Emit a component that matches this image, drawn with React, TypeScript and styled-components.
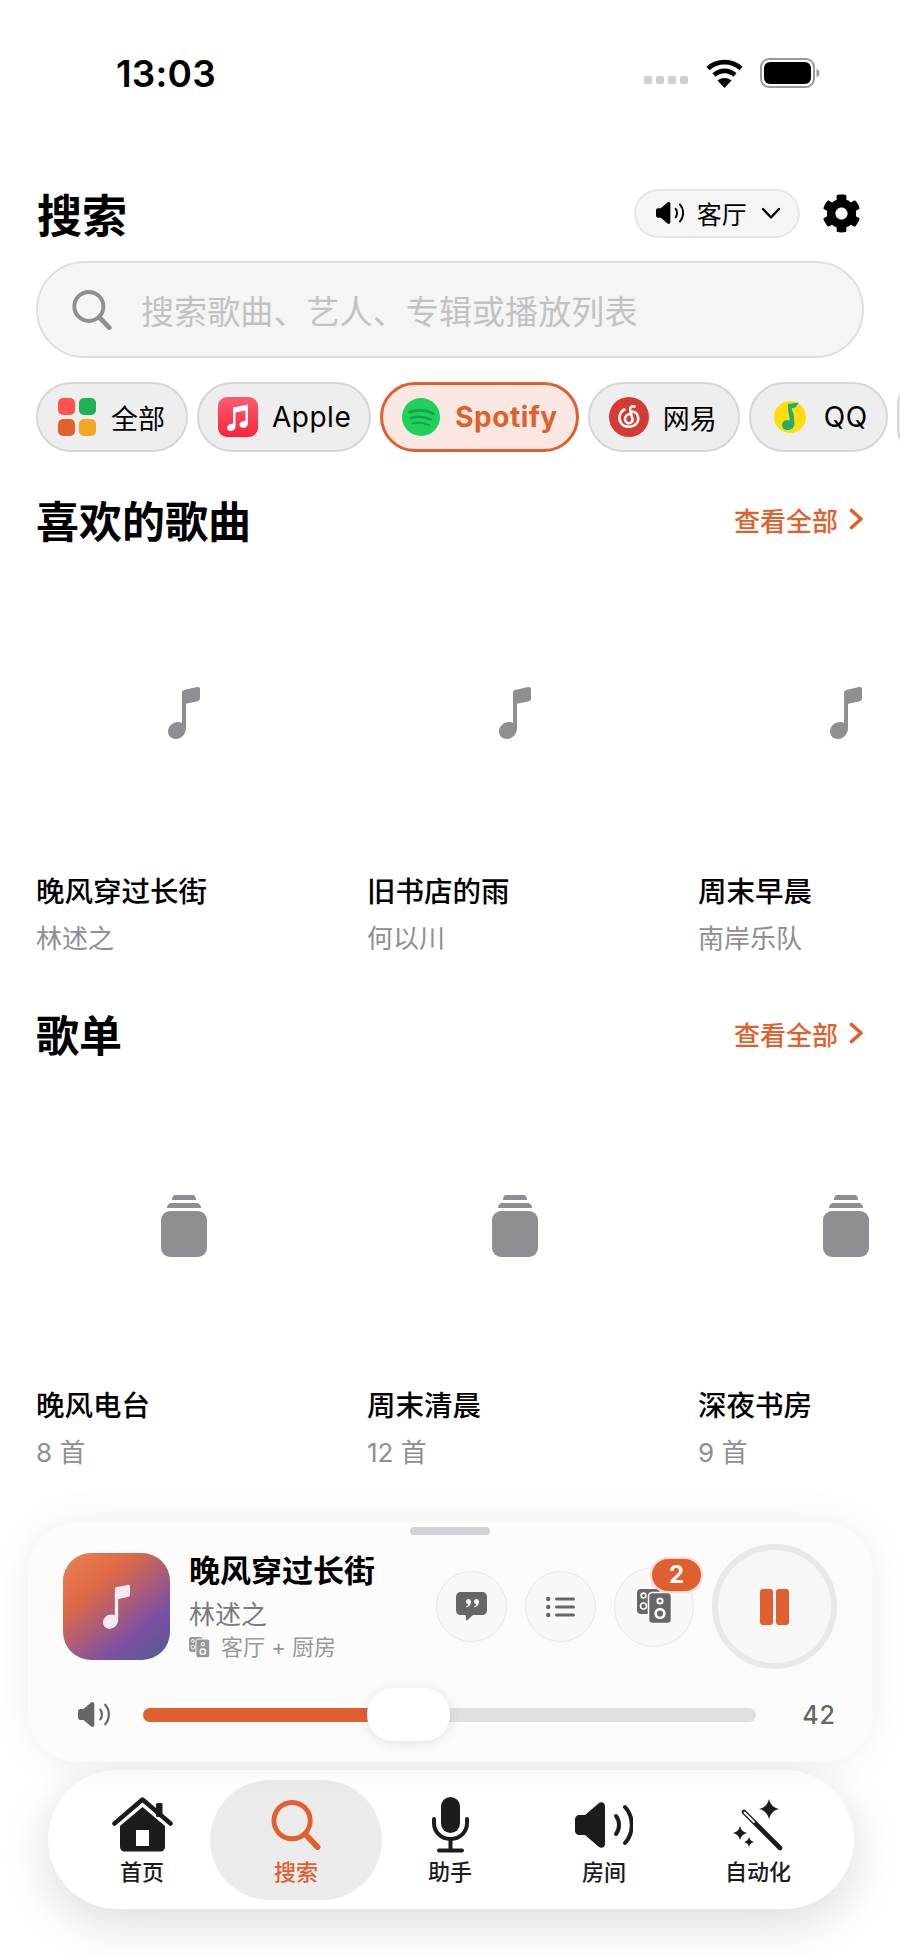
import React from 'react';
import styled, { createGlobalStyle } from 'styled-components';
import { FaCog } from 'react-icons/fa';

const ACCENT = '#e05f2e';
const FONT = `Inter, "Noto Sans CJK SC", sans-serif`;

const GlobalStyle = createGlobalStyle`
    html, body {
        margin: 0;
        padding: 0;
        background: #fff;
    }
    body {
        font-family: ${FONT};
        color: #000;
    }
`;

const Screen = styled.div`
    position: relative;
    width: 900px;
    height: 1956px;
    overflow: hidden;
    background: #fff;
`;

const StatusBar = styled.div`
    height: 146px;
    display: flex;
    align-items: center;
    justify-content: space-between;
    padding: 0 80px 0 116px;
    box-sizing: border-box;
`;

const Time = styled.span`
    font-size: 37px;
    font-weight: 600;
    letter-spacing: 0.2px;
`;

const StatusIcons = styled.div`
    display: flex;
    align-items: center;
    gap: 17px;
`;

const SignalDots = styled.div`
    display: flex;
    gap: 4px;
    margin: 14px 1px 0 0;
`;

const SignalDot = styled.i`
    width: 8px;
    height: 8px;
    border-radius: 2px;
    background: #cfcfcf;
`;

const Header = styled.div`
    margin-top: 42px;
    padding: 0 39px 0 37px;
    height: 50px;
    display: flex;
    align-items: center;
`;

const PageTitle = styled.h1`
    margin: 0;
    flex: 1;
    font-size: 45px;
    font-weight: 700;
`;

const RoomPill = styled.div`
    width: 166px;
    height: 49px;
    box-sizing: border-box;
    display: flex;
    align-items: center;
    padding-left: 20px;
    border: 2px solid #e6e6e6;
    border-radius: 25px;
    background: #f5f5f5;
    font-size: 25px;
`;

const RoomName = styled.span`
    margin: 0 14px 0 13px;
`;

const GearButton = styled.div`
    display: flex;
    margin-left: 22px;
`;

const SearchField = styled.div`
    margin: 23px 36px 0;
    height: 97px;
    box-sizing: border-box;
    display: flex;
    align-items: center;
    gap: 29px;
    padding-left: 34px;
    border: 2px solid #dedede;
    border-radius: 49px;
    background: #f5f5f5;
    font-size: 33px;
    letter-spacing: 0.1px;
    color: #c2c2c4;
`;

const ChipRow = styled.div`
    margin-top: 24px;
    padding-left: 36px;
    display: flex;
    gap: 9px;
`;

const Chip = styled.div<{ $active?: boolean }>`
    flex: none;
    height: 70px;
    box-sizing: border-box;
    display: flex;
    align-items: center;
    gap: 14px;
    padding: 0 21px 0 ${({ $active }) => ($active ? 18 : 19)}px;
    border: ${({ $active }) => ($active ? `3px solid ${ACCENT}` : '2px solid #d6d6d6')};
    border-radius: 35px;
    background: ${({ $active }) => ($active ? '#f8e8e1' : '#eeeeee')};
    color: ${({ $active }) => ($active ? ACCENT : '#000')};
    font-size: 27px;
    font-weight: ${({ $active }) => ($active ? 700 : 400)};
`;

const LatinLabel = styled.span`
    margin-right: -3px;
    font-size: 28px;
    letter-spacing: 0.5px;
`;

const ChipIcon = styled.span`
    width: 40px;
    height: 40px;
    display: flex;
    align-items: center;
    justify-content: center;
`;

const AllGrid = styled.span`
    display: grid;
    grid-template-columns: 17px 17px;
    gap: 4px;
`;

const AllCell = styled.i<{ $color: string }>`
    width: 17px;
    height: 17px;
    border-radius: 5px;
    background: ${({ $color }) => $color};
`;

const Section = styled.section`
    margin-top: 42px;
    padding-left: 36px;

    & + & {
        margin-top: 50px;
    }
`;

const SectionHead = styled.div`
    height: 50px;
    padding-right: 36px;
    display: flex;
    align-items: center;
    justify-content: space-between;
`;

const SectionTitle = styled.h2`
    margin: 0;
    font-size: 43px;
    font-weight: 700;
`;

const SeeAll = styled.span`
    display: flex;
    align-items: center;
    gap: 11px;
    color: ${ACCENT};
    font-size: 26px;
    font-weight: 500;
`;

const CardRow = styled.div`
    margin-top: 21px;
    display: flex;
    gap: 35px;
`;

const Card = styled.div`
    flex: none;
    width: 296px;
`;

const Artwork = styled.div`
    height: 296px;
    display: flex;
    align-items: center;
    justify-content: center;
`;

const CardTitle = styled.div`
    margin-top: 12px;
    font-size: 28.5px;
    font-weight: 500;
    line-height: 38px;
`;

const CardSub = styled.div`
    margin-top: 9px;
    font-size: 26px;
    line-height: 38px;
    color: #8e8e93;
`;

const Dock = styled.div`
    position: absolute;
    left: 0;
    right: 0;
    bottom: 0;
    padding: 0 27px 47px 28px;
`;

const Player = styled.div`
    position: relative;
    height: 240px;
    box-sizing: border-box;
    padding: 22px 36px 21px 35px;
    border-radius: 50px;
    background: #fbfbfb;
    box-shadow: 0 0 40px rgba(0, 0, 0, 0.07);
`;

const Handle = styled.div`
    position: absolute;
    top: 5px;
    left: 382px;
    width: 80px;
    height: 8px;
    border-radius: 4px;
    background: #d1d1d6;
`;

const PlayerRow = styled.div`
    display: flex;
    align-items: center;
`;

const Cover = styled.div`
    flex: none;
    width: 107px;
    height: 107px;
    display: flex;
    align-items: center;
    justify-content: center;
    border-radius: 28px;
    background: linear-gradient(140deg, #e88258 0%, #df6a43 30%, #7c50a4 72%, #4f5c8c 100%);
`;

const TrackInfo = styled.div`
    flex: 1;
    margin-left: 19px;
`;

const TrackTitle = styled.div`
    font-size: 31px;
    font-weight: 700;
    line-height: 40px;
`;

const TrackArtist = styled.div`
    margin-top: 6px;
    font-size: 26px;
    line-height: 36px;
    color: #7a7a7e;
`;

const TrackRooms = styled.div`
    display: flex;
    align-items: center;
    gap: 11px;
    margin-top: -1px;
    font-size: 22px;
    line-height: 30px;
    color: #98989c;
`;

const Controls = styled.div`
    display: flex;
    align-items: center;
    gap: 18px;
`;

const RoundButton = styled.div<{ $size: number }>`
    position: relative;
    width: ${({ $size }) => $size}px;
    height: ${({ $size }) => $size}px;
    box-sizing: border-box;
    display: flex;
    align-items: center;
    justify-content: center;
    border: 1.5px solid #e8e8e8;
    border-radius: 50%;
    background: #f8f8f8;
`;

const Badge = styled.div`
    position: absolute;
    top: -11px;
    right: -10px;
    width: 53px;
    height: 36px;
    box-sizing: border-box;
    display: flex;
    align-items: center;
    justify-content: center;
    border: 2px solid #fbdcd0;
    border-radius: 18px;
    background: ${ACCENT};
    color: #fff;
    font-size: 24px;
    font-weight: 700;
`;

const PauseButton = styled.div`
    width: 125px;
    height: 125px;
    box-sizing: border-box;
    display: flex;
    align-items: center;
    justify-content: center;
    gap: 3px;
    border: 6px solid #e8e8e8;
    border-radius: 50%;
    background: #f7f7f7;
`;

const PauseBar = styled.i`
    width: 13px;
    height: 36px;
    border-radius: 3px;
    background: ${ACCENT};
`;

const VolumeRow = styled.div`
    margin-top: 19px;
    height: 53px;
    display: flex;
    align-items: center;
    padding: 0 1px 0 15px;
`;

const VolumeTrack = styled.div`
    position: relative;
    flex: 1;
    height: 14px;
    margin: 0 46px 0 33px;
    border-radius: 7px;
    background: #e0e0e0;
`;

const VolumeFill = styled.div`
    height: 100%;
    border-radius: 7px;
    background: ${ACCENT};
`;

const VolumeThumb = styled.div`
    position: absolute;
    top: -20px;
    width: 83px;
    height: 53px;
    margin-left: 2px;
    border-radius: 26px;
    background: #fff;
    box-shadow: 0 2px 12px rgba(0, 0, 0, 0.1);
`;

const VolumeValue = styled.span`
    font-size: 25px;
    font-weight: 500;
    letter-spacing: 1px;
    color: #666;
`;

const NavBar = styled.nav`
    margin: 8px 19px 0 20px;
    height: 139px;
    padding-right: 2px;
    display: flex;
    align-items: center;
    justify-content: center;
    border-radius: 70px;
    background: #fff;
    box-shadow: 0 14px 50px rgba(0, 0, 0, 0.14);
`;

const NavItem = styled.div<{ $active?: boolean }>`
    flex: none;
    width: 172px;
    height: 120px;
    margin: 0 -9px;
    display: flex;
    flex-direction: column;
    align-items: center;
    border-radius: 60px;
    background: ${({ $active }) => ($active ? '#ebebeb' : 'transparent')};
    color: ${({ $active }) => ($active ? ACCENT : '#1c1c1e')};
    font-size: 22px;
    font-weight: 500;
`;

const NavIcon = styled.div`
    height: 56px;
    margin-top: 17px;
    display: flex;
    align-items: center;
    justify-content: center;
`;

const NavLabel = styled.span`
    margin-top: 4px;
    line-height: 30px;
`;

const NoteIcon = ({ width, color }: { width: number; color: string }) => (
    <svg width={width} height={width * 1.66} viewBox="0 0 32 53" fill={color}>
        <path d="M14 7 C14 5 15 4 17 3.6 L29 1 C31 .6 32 1.5 32 3 V12 C32 14 31 15 29 15.4 L18 17.6 V42 C18 48.5 13 53 8 53 C3.5 53 0 50 0 45.5 C0 40 5 36 10 36 C12 36 13 36.3 14 37 Z" />
    </svg>
);

const StackIcon = () => (
    <svg width="46" height="65" viewBox="0 0 46 65" fill="#8e8e93">
        <path d="M11 5 C11 2 12 0 15 0 H31 C34 0 35 2 35 5 Z" />
        <path d="M6 13 C6 10 8 8 11 8 H35 C38 8 40 10 40 13 Z" />
        <rect x="0" y="16" width="46" height="46" rx="9" />
    </svg>
);

const SpeakerIcon = ({ height, color }: { height: number; color: string }) => (
    <svg width={(height * 58) / 46} height={height} viewBox="0 0 58 46" fill="none">
        <path
            d="M4 13 H10 L24 1 C27 -1 30 1 30 4 V42 C30 45 27 47 24 45 L10 33 H4 C2 33 0 31 0 29 V17 C0 15 2 13 4 13 Z"
            fill={color}
        />
        <path d="M41 14 C45 19 45 27 41 32" stroke={color} strokeWidth="4" strokeLinecap="round" />
        <path d="M50 5 C59 15 59 31 50 41" stroke={color} strokeWidth="4" strokeLinecap="round" />
    </svg>
);

const ChevronDown = () => (
    <svg width="20" height="20" viewBox="0 0 20 20" fill="none">
        <path d="M2 6 L10 14.5 L18 6" stroke="#000" strokeWidth="2.4" strokeLinecap="round" strokeLinejoin="round" />
    </svg>
);

const ChevronRight = () => (
    <svg width="15" height="22" viewBox="0 0 15 22" fill="none">
        <path d="M2.5 2.5 L12 11 L2.5 19.5" stroke={ACCENT} strokeWidth="3.6" strokeLinecap="round" strokeLinejoin="round" />
    </svg>
);

const SearchIcon = ({ size, color }: { size: number; color: string }) => (
    <svg width={size} height={size} viewBox="0 0 50 51" fill="none" stroke={color} strokeLinecap="round">
        <circle cx="21" cy="21" r="18.5" strokeWidth="5" />
        <path d="M34.5 35 L47 48" strokeWidth="6" />
    </svg>
);

const DevicesIcon = ({ width, color, ring }: { width: number; color: string; ring: string }) => (
    <svg width={width} height={width} viewBox="0 0 35 35" fill={color}>
        <rect x="0" y="0" width="23" height="25" rx="4" />
        <circle cx="6.5" cy="6.5" r="2.4" fill="none" stroke={ring} strokeWidth="1.6" />
        <circle cx="6.5" cy="17" r="3" fill="none" stroke={ring} strokeWidth="1.6" />
        <rect x="11.5" y="3.5" width="23" height="31" rx="4" stroke={ring} strokeWidth="1.6" />
        <circle cx="23" cy="12" r="2.6" fill="none" stroke={ring} strokeWidth="2" />
        <circle cx="23" cy="24.5" r="4.4" fill="none" stroke={ring} strokeWidth="2.6" />
    </svg>
);

const LyricsIcon = () => (
    <svg width="31" height="29" viewBox="0 0 31 29" fill="#666">
        <path d="M5 0 H26 C29 0 31 2 31 5 V18 C31 21 29 23 26 23 H17 L10.5 29 L9.5 23 H5 C2 23 0 21 0 18 V5 C0 2 2 0 5 0 Z" />
        <path
            d="M12.5 7 C14 7 15 8.2 15 9.8 C15 12.4 13.4 14.6 10.8 15.6 L10 14.4 C11.2 13.8 12 13 12.2 12.2 C11 12.1 10 11 10 9.6 C10 8.2 11 7 12.5 7 Z M20.5 7 C22 7 23 8.2 23 9.8 C23 12.4 21.4 14.6 18.8 15.6 L18 14.4 C19.2 13.8 20 13 20.2 12.2 C19 12.1 18 11 18 9.6 C18 8.2 19 7 20.5 7 Z"
            fill="#f8f8f8"
        />
    </svg>
);

const QueueIcon = () => (
    <svg width="29" height="22" viewBox="0 0 29 22" fill="#666">
        <circle cx="2.2" cy="3" r="2.2" />
        <circle cx="2.2" cy="11" r="2.2" />
        <circle cx="2.2" cy="19" r="2.2" />
        <rect x="9" y="1.5" width="20" height="3" rx="1.5" />
        <rect x="9" y="9.5" width="20" height="3" rx="1.5" />
        <rect x="9" y="17.5" width="20" height="3" rx="1.5" />
    </svg>
);

const HomeIcon = () => (
    <svg width="61" height="56" viewBox="0 0 61 56" fill="none">
        <path
            fillRule="evenodd"
            d="M30.5 10 L53 29 V50 C53 52.5 51 54.5 49 54.5 H12 C10 54.5 8 52.5 8 50 V29 Z M24 33 H37 V49 H24 Z"
            fill="#1c1c1e"
        />
        <rect x="44" y="6" width="6.5" height="14" rx="1.5" fill="#1c1c1e" />
        <path d="M2.5 26.5 L30.5 2.5 L58.5 26.5" stroke="#1c1c1e" strokeWidth="4.5" strokeLinecap="round" strokeLinejoin="round" />
    </svg>
);

const MicIcon = () => (
    <svg width="37" height="56" viewBox="0 0 37 56" fill="none" stroke="#1c1c1e" strokeWidth="4" strokeLinecap="round">
        <rect x="9" y="0" width="19" height="36" rx="9.5" fill="#1c1c1e" stroke="none" />
        <path d="M2 22 V26 C2 35 9 42 18.5 42 C28 42 35 35 35 26 V22" />
        <path d="M18.5 42 V53" />
        <path d="M7 53.5 H30" />
    </svg>
);

const star = (cx: number, cy: number, r: number) => {
    const k = r * 0.18;
    return `M${cx} ${cy - r} Q${cx + k} ${cy - k} ${cx + r} ${cy} Q${cx + k} ${cy + k} ${cx} ${cy + r} Q${cx - k} ${cy + k} ${cx - r} ${cy} Q${cx - k} ${cy - k} ${cx} ${cy - r} Z`;
};

const WandIcon = () => (
    <svg width="50" height="52" viewBox="0 0 50 52" fill="none" strokeLinecap="round">
        <path d="M11 13 L47 49" stroke="#1c1c1e" strokeWidth="4.6" />
        <path d="M11.5 13.5 L21 23" stroke="#fff" strokeWidth="1.8" />
        <path d={star(36, 10, 10)} fill="#1c1c1e" />
        <path d={star(7, 34, 7)} fill="#1c1c1e" />
        <path d={star(16, 43, 5)} fill="#1c1c1e" />
    </svg>
);

const WifiIcon = () => (
    <svg width="37" height="29" viewBox="0 0 37 29" fill="none" stroke="#000" strokeWidth="4.6">
        <path d="M2 9.5 C11 1 26 1 35 9.5" />
        <path d="M8 16 C14 10.5 23 10.5 29 16" />
        <path d="M18.5 29 L11.5 21.5 C15 18 22 18 25.5 21.5 Z" fill="#000" stroke="none" />
    </svg>
);

const BatteryIcon = () => (
    <svg width="60" height="30" viewBox="0 0 60 30">
        <rect x="1" y="1" width="53" height="28" rx="8" fill="#fff" stroke="#9a9a9a" strokeWidth="2" />
        <rect x="4" y="4" width="47" height="22" rx="6" fill="#000" />
        <path d="M56.5 11 C58.5 11.5 59.5 13 59.5 15 C59.5 17 58.5 18.5 56.5 19 Z" fill="#9a9a9a" />
    </svg>
);

const AppleIcon = () => (
    <svg width="40" height="40" viewBox="0 0 40 40">
        <defs>
            <linearGradient id="appleBg" x1="0" y1="0" x2="0" y2="1">
                <stop offset="0" stopColor="#fb5c74" />
                <stop offset="1" stopColor="#fa233b" />
            </linearGradient>
        </defs>
        <rect width="40" height="40" rx="9" fill="url(#appleBg)" />
        <path
            d="M15 10.5 L30 7.5 V26 C30 29 27.5 31 25 31 C23 31 21.5 29.6 21.5 27.8 C21.5 25.5 23.6 24.4 25.5 24 L27.5 23.6 V13.5 L17.5 15.5 V29.5 C17.5 32.5 15 34 12.5 34 C10.5 34 9 32.6 9 30.8 C9 28.5 11 27.4 13 27 L15 26.6 Z"
            fill="#fff"
        />
    </svg>
);

const SpotifyIcon = () => (
    <svg width="38" height="38" viewBox="0 0 38 38" fill="none" stroke="#17a34a" strokeLinecap="round">
        <circle cx="19" cy="19" r="19" fill="#1fd05c" stroke="none" />
        <path d="M7.5 14 C15 11.5 24 12 31 15.5" strokeWidth="3" />
        <path d="M9 20 C15 18.3 23 18.7 29 21.5" strokeWidth="2.6" />
        <path d="M10.5 25.5 C16 24.3 22 24.6 27 27" strokeWidth="2.2" />
    </svg>
);

const NeteaseIcon = () => (
    <svg width="40" height="40" viewBox="0 0 40 40" fill="none" stroke="#fff" strokeWidth="2.6" strokeLinecap="round">
        <circle cx="20" cy="20" r="20" fill="#d43c33" stroke="none" />
        <path d="M25.5 9.5 C22.5 8.5 20.5 10.5 21.2 13.2 L23.4 21.5 C24.2 25 21 27 18.5 26 C15.5 24.8 15 20.8 17.4 18.6 C18.6 17.5 20 17 21.5 17" />
        <path d="M15.5 12.5 C10.5 15 8.8 21.5 12 26 C15.5 31 23.5 31 27.5 26.5 C31 22 29 15.5 23.5 14.5" />
    </svg>
);

const QQIcon = () => (
    <svg width="32" height="32" viewBox="0 0 32 32">
        <circle cx="16" cy="16" r="16" fill="#ffdc0a" />
        <path
            d="M14 3 L25 1.5 L21.5 6.5 L17.5 7.5 L19.5 13 L20.5 22 C20.5 26.5 17.5 29 14 29 C10.5 29 8 27 8 24 C8 21 10.5 19 13.5 19 C14.5 19 15.5 19.2 16 19.6 L14 9 Z"
            fill="#1fae6b"
        />
    </svg>
);

const songs = [
    { title: '晚风穿过长街', sub: '林述之' },
    { title: '旧书店的雨', sub: '何以川' },
    { title: '周末早晨', sub: '南岸乐队' },
];

const playlists = [
    { title: '晚风电台', sub: '8 首' },
    { title: '周末清晨', sub: '12 首' },
    { title: '深夜书房', sub: '9 首' },
];

const allColors = ['#ff5252', '#1fb254', '#e2612c', '#f5a623'];
const VOLUME = 42;

const App: React.FC = () => {
    return (
        <Screen>
            <GlobalStyle />
            <StatusBar>
                <Time>13:03</Time>
                <StatusIcons>
                    <SignalDots>
                        {[0, 1, 2, 3].map(i => (
                            <SignalDot key={i} />
                        ))}
                    </SignalDots>
                    <WifiIcon />
                    <BatteryIcon />
                </StatusIcons>
            </StatusBar>

            <Header>
                <PageTitle>搜索</PageTitle>
                <RoomPill>
                    <SpeakerIcon height={22} color="#000" />
                    <RoomName>客厅</RoomName>
                    <ChevronDown />
                </RoomPill>
                <GearButton>
                    <FaCog size={39} color="#000" />
                </GearButton>
            </Header>

            <SearchField>
                <SearchIcon size={40} color="#8e8e93" />
                搜索歌曲、艺人、专辑或播放列表
            </SearchField>

            <ChipRow>
                <Chip>
                    <ChipIcon>
                        <AllGrid>
                            {allColors.map(c => (
                                <AllCell key={c} $color={c} />
                            ))}
                        </AllGrid>
                    </ChipIcon>
                    全部
                </Chip>
                <Chip>
                    <ChipIcon>
                        <AppleIcon />
                    </ChipIcon>
                    <LatinLabel>Apple</LatinLabel>
                </Chip>
                <Chip $active>
                    <ChipIcon>
                        <SpotifyIcon />
                    </ChipIcon>
                    <LatinLabel>Spotify</LatinLabel>
                </Chip>
                <Chip>
                    <ChipIcon>
                        <NeteaseIcon />
                    </ChipIcon>
                    网易
                </Chip>
                <Chip>
                    <ChipIcon>
                        <QQIcon />
                    </ChipIcon>
                    <LatinLabel>QQ</LatinLabel>
                </Chip>
                <Chip />
            </ChipRow>

            <Section>
                <SectionHead>
                    <SectionTitle>喜欢的歌曲</SectionTitle>
                    <SeeAll>
                        查看全部
                        <ChevronRight />
                    </SeeAll>
                </SectionHead>
                <CardRow>
                    {songs.map(song => (
                        <Card key={song.title}>
                            <Artwork>
                                <NoteIcon width={32} color="#8e8e93" />
                            </Artwork>
                            <CardTitle>{song.title}</CardTitle>
                            <CardSub>{song.sub}</CardSub>
                        </Card>
                    ))}
                </CardRow>
            </Section>

            <Section>
                <SectionHead>
                    <SectionTitle>歌单</SectionTitle>
                    <SeeAll>
                        查看全部
                        <ChevronRight />
                    </SeeAll>
                </SectionHead>
                <CardRow>
                    {playlists.map(list => (
                        <Card key={list.title}>
                            <Artwork>
                                <StackIcon />
                            </Artwork>
                            <CardTitle>{list.title}</CardTitle>
                            <CardSub>{list.sub}</CardSub>
                        </Card>
                    ))}
                </CardRow>
            </Section>

            <Dock>
                <Player>
                    <Handle />
                    <PlayerRow>
                        <Cover>
                            <NoteIcon width={27} color="#f4ecf0" />
                        </Cover>
                        <TrackInfo>
                            <TrackTitle>晚风穿过长街</TrackTitle>
                            <TrackArtist>林述之</TrackArtist>
                            <TrackRooms>
                                <DevicesIcon width={21} color="#98989c" ring="#fbfbfb" />
                                客厅 + 厨房
                            </TrackRooms>
                        </TrackInfo>
                        <Controls>
                            <RoundButton $size={71}>
                                <LyricsIcon />
                            </RoundButton>
                            <RoundButton $size={71}>
                                <QueueIcon />
                            </RoundButton>
                            <RoundButton $size={80}>
                                <DevicesIcon width={35} color="#666" ring="#f8f8f8" />
                                <Badge>2</Badge>
                            </RoundButton>
                            <PauseButton>
                                <PauseBar />
                                <PauseBar />
                            </PauseButton>
                        </Controls>
                    </PlayerRow>
                    <VolumeRow>
                        <SpeakerIcon height={25} color="#666" />
                        <VolumeTrack>
                            <VolumeFill style={{ width: `${VOLUME + 2}%` }} />
                            <VolumeThumb style={{ left: `calc((100% - 83px) * ${VOLUME / 100})` }} />
                        </VolumeTrack>
                        <VolumeValue>{VOLUME}</VolumeValue>
                    </VolumeRow>
                </Player>
                <NavBar>
                    <NavItem>
                        <NavIcon>
                            <HomeIcon />
                        </NavIcon>
                        <NavLabel>首页</NavLabel>
                    </NavItem>
                    <NavItem $active>
                        <NavIcon>
                            <SearchIcon size={50} color={ACCENT} />
                        </NavIcon>
                        <NavLabel>搜索</NavLabel>
                    </NavItem>
                    <NavItem>
                        <NavIcon>
                            <MicIcon />
                        </NavIcon>
                        <NavLabel>助手</NavLabel>
                    </NavItem>
                    <NavItem>
                        <NavIcon>
                            <SpeakerIcon height={46} color="#1c1c1e" />
                        </NavIcon>
                        <NavLabel>房间</NavLabel>
                    </NavItem>
                    <NavItem>
                        <NavIcon>
                            <WandIcon />
                        </NavIcon>
                        <NavLabel>自动化</NavLabel>
                    </NavItem>
                </NavBar>
            </Dock>
        </Screen>
    );
};

export default App;
